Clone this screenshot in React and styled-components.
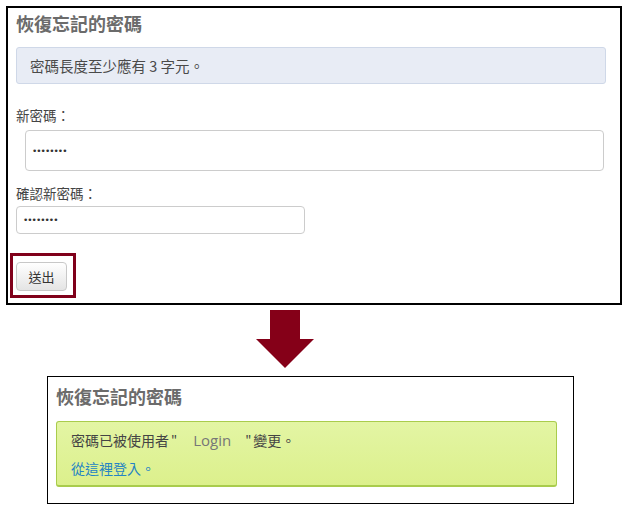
import React from "react";
import styled, { createGlobalStyle } from "styled-components";

const GlobalStyle = createGlobalStyle`
  html, body {
    margin: 0;
    padding: 0;
    background: #ffffff;
  }
  body {
    font-family: "Noto Sans CJK TC", "Noto Sans", sans-serif;
    color: #444;
  }
  * {
    box-sizing: border-box;
  }
`;

const App = () => {
  return (
    <Page>
      <GlobalStyle />
      <TopPanel>
        <Title>恢復忘記的密碼</Title>
        <InfoBox>密碼長度至少應有 3 字元。</InfoBox>
        <Label top={21}>新密碼：</Label>
        <Input type="password" defaultValue="12345678" wide readOnly />
        <Label top={12}>確認新密碼：</Label>
        <Input type="password" defaultValue="12345678" readOnly />
        <Highlight>
          <Button>送出</Button>
        </Highlight>
      </TopPanel>
      <Arrow width="58" height="58" viewBox="0 0 58 58">
        <polygon points="14,0 44,0 44,29 58,29 29,58 0,29 14,29" fill="#850018" />
      </Arrow>
      <BottomPanel>
        <Title small>恢復忘記的密碼</Title>
        <SuccessBox>
          <Line>
            密碼已被使用者<Quote>"</Quote>
            <User>Login</User>
            <Quote>"</Quote>變更。
          </Line>
          <Link href="#">從這裡登入。</Link>
        </SuccessBox>
      </BottomPanel>
    </Page>
  );
};

export default App;

const Page = styled.div`
  width: 630px;
  height: 514px;
  display: flex;
  flex-direction: column;
  padding-top: 6px;
`;

const TopPanel = styled.div`
  margin-left: 6px;
  width: 616px;
  height: 299px;
  border: 2px solid #000;
  padding: 0 14px 0 8px;
  display: flex;
  flex-direction: column;
  align-items: flex-start;
`;

const Title = styled.h1`
  margin: ${(p) => (p.small ? "8px 0 0 0" : "4px 0 0 0")};
  font-size: 18px;
  line-height: 22px;
  font-weight: 700;
  color: #6b6b6b;
`;

const InfoBox = styled.div`
  margin-top: 13px;
  width: 100%;
  height: 37px;
  background: #e8ecf5;
  border: 1px solid #cfd8e8;
  border-radius: 3px;
  padding-left: 13px;
  display: flex;
  align-items: center;
  font-size: 14.5px;
  color: #4a4a4a;
`;

const Label = styled.div`
  margin-top: ${(p) => p.top}px;
  font-size: 13.5px;
  line-height: 20px;
  color: #444;
`;

const Input = styled.input`
  margin: ${(p) => (p.wide ? "5px 0 0 9px" : "3px 0 0 0")};
  width: ${(p) => (p.wide ? "579px" : "289px")};
  height: ${(p) => (p.wide ? "41px" : "28px")};
  border: 1px solid #cccccc;
  border-radius: 4px;
  padding: 0 6px;
  font-family: "DejaVu Sans", sans-serif;
  font-size: 9px;
  letter-spacing: -1px;
  color: #333;
  outline: none;
  background: #fff;
`;

const Highlight = styled.div`
  margin: 19px 0 0 -6px;
  width: 66px;
  height: 45px;
  border: 3px solid #80001a;
  padding: 6px 0 0 3px;
`;

const Button = styled.button`
  width: 51px;
  height: 29px;
  border: 1px solid #c8c8c8;
  border-radius: 4px;
  background: linear-gradient(#ffffff, #e4e4e4);
  font-family: "Noto Sans CJK TC", sans-serif;
  font-size: 13px;
  color: #333;
  padding: 0;
`;

const Arrow = styled.svg`
  display: block;
  margin: 5px 0 0 256px;
`;

const BottomPanel = styled.div`
  margin: 8px 0 0 47px;
  width: 527px;
  height: 128px;
  border: 1.5px solid #000;
  padding: 0 16px 0 8px;
  display: flex;
  flex-direction: column;
  align-items: flex-start;
`;

const SuccessBox = styled.div`
  margin-top: 14px;
  width: 100%;
  height: 66px;
  background: linear-gradient(#e3f5a4, #dcf08c);
  border: 1px solid #a9cc4c;
  border-bottom-width: 2px;
  border-radius: 3px;
  padding: 8px 0 0 14px;
  font-size: 14px;
  color: #444;
`;

const Line = styled.div`
  line-height: 20px;
  display: flex;
  align-items: center;
`;

const Quote = styled.span`
  font-size: 13px;
  margin: 0 2px;
`;

const User = styled.span`
  padding: 0 12px 0 14px;
  font-family: "Open Sans", "Noto Sans", sans-serif;
  font-size: 15px;
  color: #777;
`;

const Link = styled.a`
  display: block;
  margin-top: 8px;
  line-height: 20px;
  color: #2584c4;
  text-decoration: none;
`;
